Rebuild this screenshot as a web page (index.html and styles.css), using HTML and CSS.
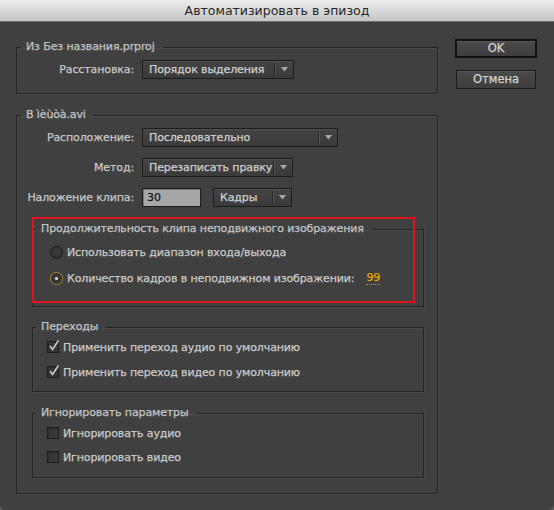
FILE: index.html
```html
<!DOCTYPE html>
<html lang="ru">
<head>
<meta charset="utf-8">
<title>Автоматизировать в эпизод</title>
<link rel="stylesheet" href="styles.css">
</head>
<body>
<div class="dialog">
  <div class="titlebar">Автоматизировать в эпизод</div>
  <div class="content">
    <div class="left">
      <fieldset class="group g1">
        <legend>Из Без названия.prproj</legend>
        <div class="form">
          <span class="lbl">Расстановка:</span>
          <div class="select w152"><span class="sel-text">Порядок выделения</span><span class="sep"></span><span class="arr"><svg width="7" height="5" viewBox="0 0 7 5"><polygon points="0,0 7,0 3.5,4.5" fill="#a8a8a8"/></svg></span></div>
        </div>
      </fieldset>

      <fieldset class="group g2">
        <legend>В ìèùòà.avi</legend>
        <div class="form rows">
          <span class="lbl">Расположение:</span>
          <div class="select w196"><span class="sel-text">Последовательно</span><span class="sep"></span><span class="arr"><svg width="7" height="5" viewBox="0 0 7 5"><polygon points="0,0 7,0 3.5,4.5" fill="#a8a8a8"/></svg></span></div>
          <span class="lbl">Метод:</span>
          <div class="select w151"><span class="sel-text">Перезаписать правку</span><span class="sep"></span><span class="arr"><svg width="7" height="5" viewBox="0 0 7 5"><polygon points="0,0 7,0 3.5,4.5" fill="#a8a8a8"/></svg></span></div>
          <span class="lbl">Наложение клипа:</span>
          <div class="pair">
            <div class="input">30</div>
            <div class="select w79"><span class="sel-text">Кадры</span><span class="sep"></span><span class="arr"><svg width="7" height="5" viewBox="0 0 7 5"><polygon points="0,0 7,0 3.5,4.5" fill="#a8a8a8"/></svg></span></div>
          </div>
        </div>

        <fieldset class="group inner still">
          <legend>Продолжительность клипа неподвижного изображения</legend>
          <div class="opts radios">
            <div class="opt"><span class="radio"></span><span>Использовать диапазон входа/выхода</span></div>
            <div class="opt"><span class="radio on"></span><span>Количество кадров в неподвижном изображении:</span><span class="num">99</span></div>
          </div>
          <div class="annot"></div>
        </fieldset>

        <fieldset class="group inner trans">
          <legend>Переходы</legend>
          <div class="opts checks">
            <div class="opt"><span class="check"><svg width="14" height="14" viewBox="0 0 14 14"><path d="M3 7 L5.5 10.5 L11.5 1.5" fill="none" stroke="#cfcfcf" stroke-width="1.5"/></svg></span><span>Применить переход аудио по умолчанию</span></div>
            <div class="opt"><span class="check"><svg width="14" height="14" viewBox="0 0 14 14"><path d="M3 7 L5.5 10.5 L11.5 1.5" fill="none" stroke="#cfcfcf" stroke-width="1.5"/></svg></span><span>Применить переход видео по умолчанию</span></div>
          </div>
        </fieldset>

        <fieldset class="group inner ignore">
          <legend>Игнорировать параметры</legend>
          <div class="opts checks tight">
            <div class="opt"><span class="check"></span><span>Игнорировать аудио</span></div>
            <div class="opt"><span class="check"></span><span>Игнорировать видео</span></div>
          </div>
        </fieldset>
      </fieldset>
    </div>

    <div class="buttons">
      <div class="btn default">OK</div>
      <div class="btn">Отмена</div>
    </div>
  </div>
</div>
</body>
</html>
```

FILE: styles.css
```css
* { box-sizing: border-box; }

html, body {
  margin: 0;
  width: 554px;
  height: 510px;
  overflow: hidden;
  background: #5a5a5a;
}

body {
  font-family: "DejaVu Sans", "Noto Sans", sans-serif;
  font-size: 11px;
  letter-spacing: -0.12px;
  color: #cbcbcb;
  -webkit-text-stroke: 0.25px currentColor;
}

.dialog {
  width: 554px;
  height: 510px;
  background: #404040;
  border-radius: 0 0 6px 6px;
  display: flex;
  flex-direction: column;
  overflow: hidden;
}

.titlebar {
  flex: none;
  height: 22px;
  line-height: 21px;
  text-align: center;
  font-size: 12.5px;
  letter-spacing: 0;
  color: #262626;
  background: linear-gradient(#ededed, #c5c5c5);
  border-bottom: 1px solid #6e6e6e;
  -webkit-text-stroke: 0;
}

.content {
  display: flex;
  align-items: flex-start;
  padding: 18px 17px 0 16px;
  gap: 17px;
}

.left {
  width: 422px;
  display: flex;
  flex-direction: column;
  gap: 14px;
}

fieldset.group {
  margin: 0;
  padding: 0;
  min-width: 0;
  border: 1px solid #242424;
  box-shadow: inset 1px 1px 0 #4a4a4a, 1px 1px 0 #4a4a4a;
}

legend {
  height: 14px;
  line-height: 14px;
  margin-left: 4px;
  padding: 0 8px 0 5px;
  color: #c4c4c4;
}

.form {
  display: grid;
  grid-template-columns: 117px auto;
  column-gap: 8px;
  row-gap: 11px;
  align-items: center;
  justify-items: start;
}

.g1 .form { padding: 6px 0 14px; }
.g2 .form { padding: 6px 0 0; }

.lbl {
  justify-self: end;
  color: #c8c8c8;
}

.select {
  height: 19px;
  display: flex;
  align-items: center;
  border: 1px solid #1c1c1c;
  background: linear-gradient(#444444, #3a3a3a);
  box-shadow: inset 0 1px 0 #4e4e4e;
  padding-left: 6px;
  color: #d0d0d0;
}

.sel-text {
  flex: 1;
  white-space: nowrap;
  overflow: hidden;
}

.sep {
  width: 1px;
  height: 13px;
  background: #242424;
  box-shadow: 1px 0 0 #575757;
}

.arr {
  width: 18px;
  display: flex;
  justify-content: center;
  align-items: center;
}

.w152 { width: 152px; }
.w196 { width: 196px; }
.w151 { width: 151px; }
.w79 { width: 79px; }

.pair {
  display: flex;
  gap: 12px;
}

.input {
  width: 59px;
  height: 19px;
  line-height: 17px;
  padding-left: 4px;
  background: #a7a7a7;
  border: 1px solid #1c1c1c;
  box-shadow: inset 1px 1px 0 #7a7a7a;
  color: #141414;
}

fieldset.inner {
  margin: 0 13px 0 15px;
}

fieldset.inner legend {
  margin-left: 3px;
  padding: 0 8px 0 5px;
}

fieldset.still { margin-top: 15px; position: relative; }
fieldset.trans { margin-top: 13px; }
fieldset.ignore { margin-top: 14px; margin-bottom: 15px; }

.opts {
  display: flex;
  flex-direction: column;
}

.radios { padding: 8px 0 20px; gap: 10px; }
.checks { padding: 5px 0 11px; gap: 9px; }
.checks.tight { padding: 5px 0 12px; gap: 8px; }

.opt {
  height: 16px;
  display: flex;
  align-items: center;
  white-space: nowrap;
  color: #cbcbcb;
}

.radio {
  flex: none;
  width: 13px;
  height: 13px;
  border-radius: 50%;
  border: 1px solid #1a1a1a;
  background: linear-gradient(#3a3a3a, #333333);
  margin: 0 4px 0 17px;
  display: flex;
  align-items: center;
  justify-content: center;
}

.radio.on {
  border-color: #b38d1e;
  box-shadow: inset 0 0 0 1px #2a2a2a;
}

.radio.on::after {
  content: "";
  width: 3px;
  height: 3px;
  border-radius: 50%;
  background: #e0e0e0;
}

.num {
  margin-left: 12px;
  color: #e5aa00;
  border-bottom: 1px dotted #c89400;
  line-height: 12px;
}

.check {
  flex: none;
  width: 12px;
  height: 12px;
  border: 1px solid #1c1c1c;
  background: #363636;
  box-shadow: inset 1px 1px 0 #2c2c2c;
  margin: 0 4px 0 14px;
  position: relative;
}

.check svg {
  position: absolute;
  left: -1px;
  top: -3px;
}

.annot {
  position: absolute;
  left: -1px;
  top: -19px;
  width: 383px;
  height: 86px;
  border: 2px solid #e3131b;
  pointer-events: none;
}

.buttons {
  width: 82px;
  margin-top: -1px;
  display: flex;
  flex-direction: column;
  align-items: center;
  gap: 12px;
}

.btn {
  width: 80px;
  height: 19px;
  line-height: 17px;
  text-align: center;
  font-size: 11.5px;
  letter-spacing: 0;
  color: #d4d4d4;
  border: 1px solid #1c1c1c;
  background: linear-gradient(#4b4b4b, #3d3d3d);
  box-shadow: inset 0 1px 0 #575757;
}

.btn.default {
  width: 82px;
  border: 2px solid #121212;
  line-height: 15px;
}
```
